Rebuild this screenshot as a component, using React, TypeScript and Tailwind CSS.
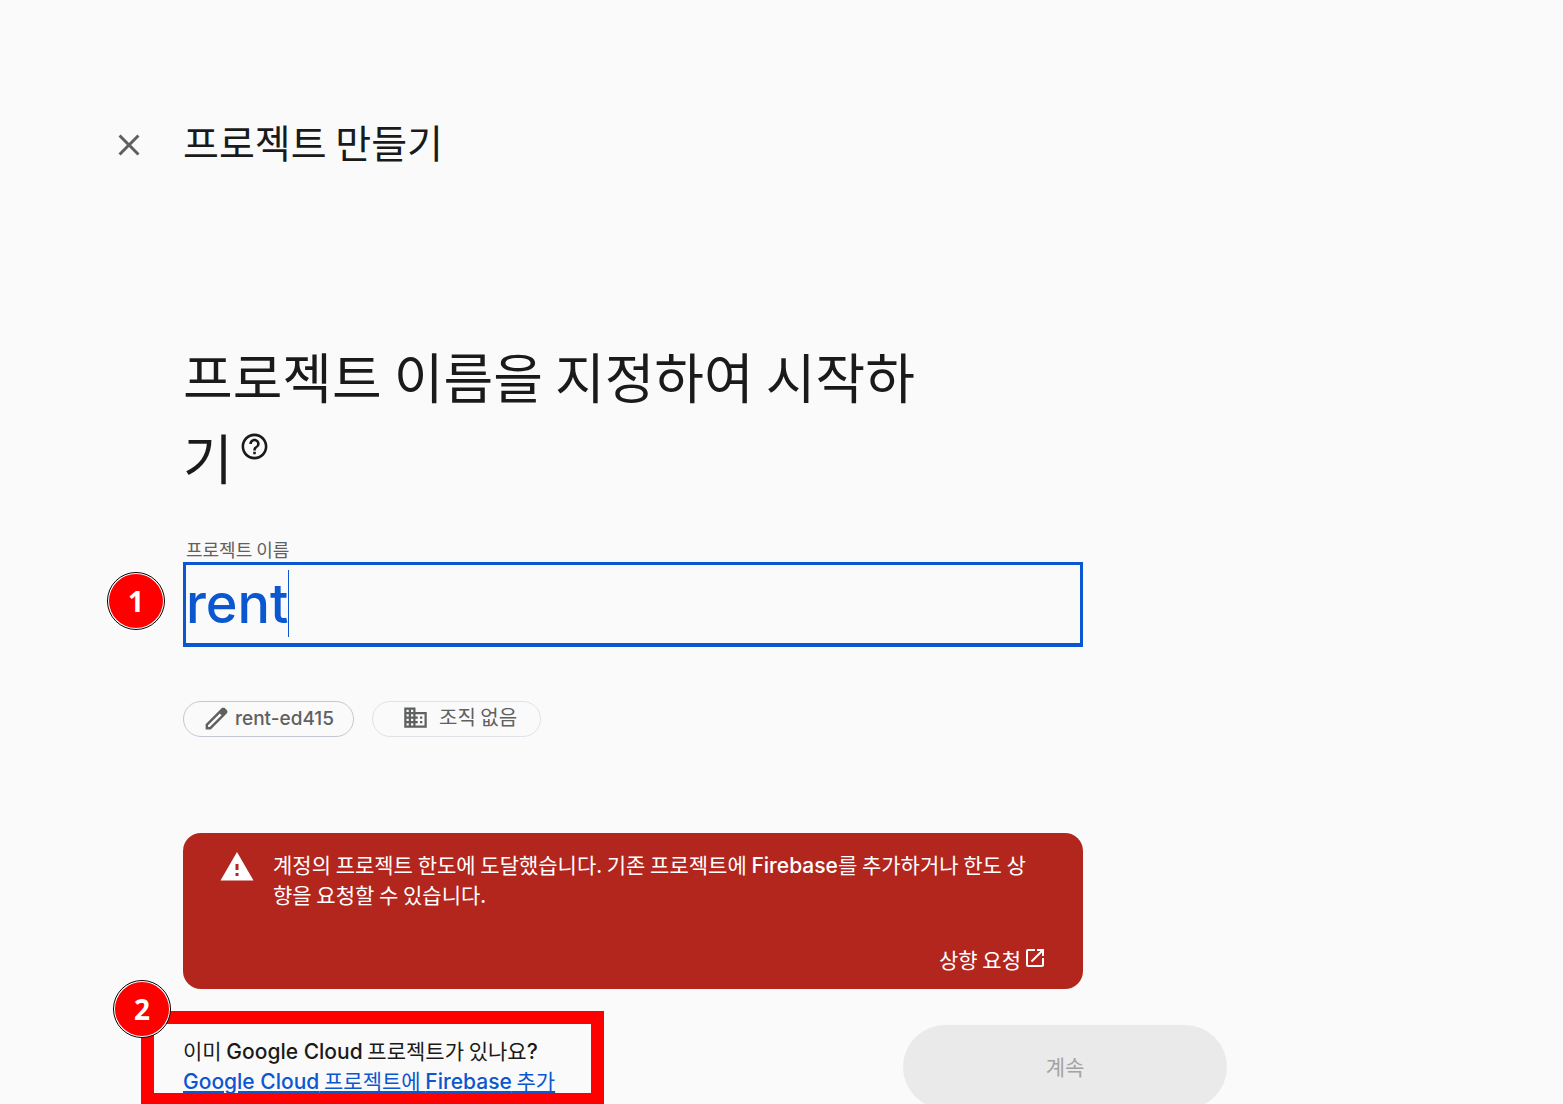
import { useState } from 'react';
import { MdClose, MdDomain, MdHelpOutline, MdOpenInNew, MdWarning } from 'react-icons/md';

function EditIcon({ className = '' }: { className?: string }) {
  return (
    <svg viewBox="0 -960 960 960" fill="currentColor" className={className} aria-hidden="true">
      <path d="M200-200h57l391-391-57-57-391 391v57Zm-80 80v-170l528-527q12-11 26.5-17t30.5-6q16 0 31 6t26 18l55 56q12 11 17.5 26t5.5 30q0 16-5.5 30.5T817-647L290-120H120Z" />
    </svg>
  );
}

// Product names are set in the Latin face, everything else in the Korean one
function Latin({ children }: { children: string }) {
  return <span className="font-[Inter,sans-serif] font-medium leading-none">{children}</span>;
}

function StepBadge({ step, className = '' }: { step: number; className?: string }) {
  return (
    <span
      className={`absolute flex items-center justify-center w-[58px] h-[58px] rounded-full border border-black bg-white p-px ${className}`}
    >
      <span className="flex items-center justify-center w-full h-full rounded-full bg-[#ff0000] text-white text-[28px] leading-none font-bold font-['Open_Sans','Noto_Sans_CJK_KR',sans-serif]">
        {step}
      </span>
    </span>
  );
}

export default function App() {
  const [projectName, setProjectName] = useState('rent');

  return (
    <div className="h-screen overflow-hidden bg-[#fafafa] text-[#1a1a1a] font-['Noto_Sans_CJK_KR',sans-serif]">
      {/* Header */}
      <header className="flex items-start gap-9 pl-[111px] pt-[111px]">
        <button type="button" aria-label="닫기" className="mt-4 text-[#5f5f5f]">
          <MdClose className="w-9 h-9" />
        </button>
        <h1 className="text-[39px] leading-[60px]">프로젝트 만들기</h1>
      </header>

      <main className="max-w-[1227px] pl-[183px] pt-[164px]">
        <h2 className="max-w-[780px] text-[54px] leading-[81px] break-all">
          프로젝트 이름을 지정하여 시작하기
          <button type="button" aria-label="도움말" className="inline-block align-top ml-[6px] mt-[15px]">
            <MdHelpOutline className="w-[31px] h-[31px]" />
          </button>
        </h2>

        {/* Project name */}
        <div className="relative max-w-[900px] mt-10">
          <label htmlFor="project-name" className="block pl-[3px] pb-px text-[18px] leading-6 text-[#5f6060]">
            프로젝트 이름
          </label>
          <input
            id="project-name"
            type="text"
            value={projectName}
            onChange={e => setProjectName(e.target.value)}
            className="block w-full h-[85px] pb-0.5 border-[3px] border-b-4 border-[#0b57d0] font-[Inter,'Noto_Sans_CJK_KR',sans-serif] text-[54px] font-medium text-[#0b57d0] outline-none"
          />
          <span className="absolute left-[105px] top-[33px] w-px h-[67px] bg-[#0b57d0]" />
          <StepBadge step={1} className="-left-[76px] top-[35px]" />
        </div>

        {/* Project id and organization */}
        <div className="flex gap-[18px] mt-[54px] text-[#5f6060]">
          <button type="button" className="flex items-center gap-1 h-9 pl-[18px] pr-[19px] pb-0.5 rounded-full border border-[#c4c7d5] text-[19px]">
            <EditIcon className="w-[29px] h-[29px]" />
            <Latin>rent-ed415</Latin>
          </button>
          <button type="button" className="flex items-center gap-[10px] h-9 pl-[29px] pr-[23px] pb-1 rounded-full border border-[#e1e2e8] text-[20px]">
            <MdDomain className="w-[27px] h-[27px]" />
            조직 없음
          </button>
        </div>

        {/* Quota alert */}
        <div role="alert" className="flex max-w-[900px] gap-[18px] mt-24 px-9 pt-4 pb-[15px] rounded-[18px] bg-[#b3261e] text-white text-[21px] leading-[30px]">
          <MdWarning className="shrink-0 w-9 h-9" />
          <div className="flex-1">
            <p className="break-all pr-3">
              계정의 프로젝트 한도에 도달했습니다. 기존 프로젝트에 <Latin>Firebase</Latin>를 추가하거나 한도 상향을 요청할 수 있습니다.
            </p>
            <div className="flex justify-end mt-[35px]">
              <a href="#quota" className="flex items-start gap-0.5">
                상향 요청
                <MdOpenInNew className="w-6 h-6 mt-0.5" />
              </a>
            </div>
          </div>
        </div>

        {/* Footer */}
        <div className="flex items-start justify-between mt-9">
          <div className="relative pt-[10px] text-[21px] leading-[30px]">
            <p>
              이미 <Latin>Google Cloud</Latin> 프로젝트가 있나요<Latin>?</Latin>
            </p>
            <a href="#add-firebase" className="block underline text-[#0b57d0]">
              <Latin>Google Cloud</Latin> 프로젝트에 <Latin>Firebase</Latin> 추가
            </a>
            <div className="absolute -left-[42px] -top-[14px] w-[463px] h-[95px] border-[13px] border-[#ff0000] pointer-events-none" />
            <StepBadge step={2} className="-left-[70px] -top-[45px]" />
          </div>
          <button type="button" disabled className="w-[324px] h-[84px] rounded-full bg-[#eaeaea] text-[21px] text-[#a3a3a3]">
            계속
          </button>
        </div>
      </main>
    </div>
  );
}
